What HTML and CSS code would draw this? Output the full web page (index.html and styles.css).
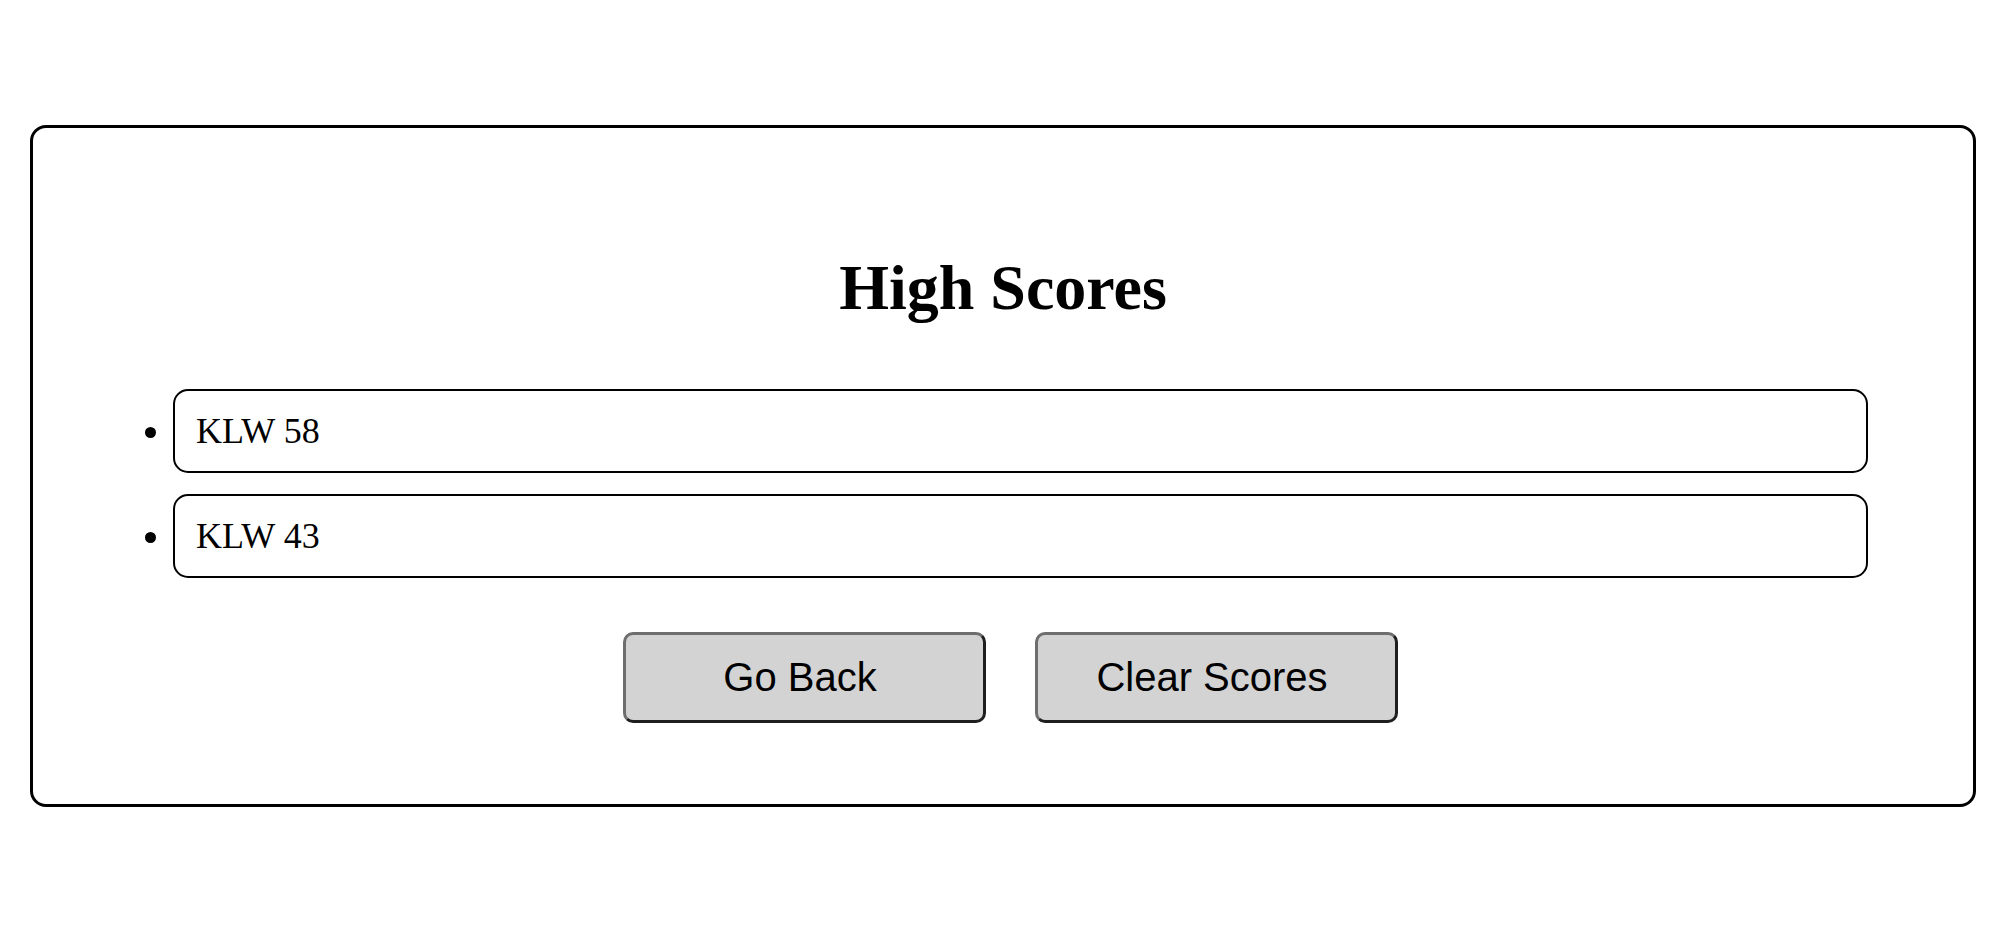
FILE: index.html
```html
<!DOCTYPE html>
<html lang="en">
<head>
<meta charset="utf-8">
<title>High Scores</title>
<link rel="stylesheet" href="styles.css">
</head>
<body>
<div class="page">
  <section class="card">
    <h1 class="title">High Scores</h1>
    <ul class="scores">
      <li class="score">KLW 58</li>
      <li class="score">KLW 43</li>
    </ul>
    <div class="actions">
      <button class="btn" type="button">Go Back</button>
      <button class="btn" type="button">Clear Scores</button>
    </div>
  </section>
</div>
</body>
</html>
```
FILE: styles.css
```css
html, body {
  margin: 0;
  padding: 0;
  background: #ffffff;
}

body {
  font-family: "Liberation Serif", "Times New Roman", serif;
  color: #000;
}

.page {
  padding: 125px 18px 0 30px;
}

.card {
  box-sizing: border-box;
  height: 682px;
  border: 3px solid #000;
  border-radius: 16px;
  padding: 124px 0 0;
}

.title {
  margin: 0;
  text-align: center;
  font-size: 64px;
  line-height: 72px;
  font-weight: bold;
}

.scores {
  margin: 65px 105px 0 140px;
  padding: 0;
  list-style: disc outside;
}

.score {
  box-sizing: border-box;
  height: 84px;
  border: 2px solid #000;
  border-radius: 15px;
  padding: 20px 21px;
  font-size: 36px;
  line-height: 40px;
}

.score + .score {
  margin-top: 21px;
}

.actions {
  display: flex;
  justify-content: center;
  gap: 49px;
  margin-top: 54px;
  padding-left: 14px;
}

.btn {
  box-sizing: border-box;
  width: 363px;
  height: 91px;
  background: #d3d3d3;
  border: 3px solid #6e6e6e;
  border-right-color: #1e1e1e;
  border-bottom-color: #1e1e1e;
  border-radius: 10px;
  font-family: "Liberation Sans", Arial, sans-serif;
  font-size: 40px;
  color: #000;
  padding: 0 8px 0 0;
  cursor: pointer;
}
```
